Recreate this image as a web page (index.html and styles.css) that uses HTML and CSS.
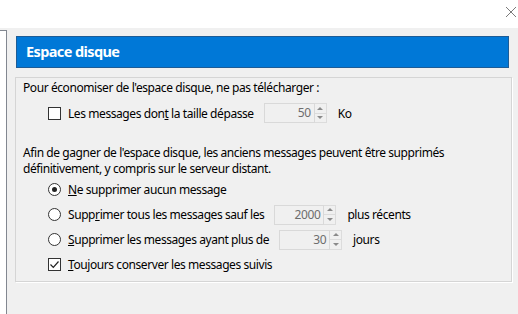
FILE: index.html
```html
<!DOCTYPE html>
<html lang="fr">
<head>
    <meta charset="UTF-8">
    <title>Espace disque</title>
    <link rel="stylesheet" href="styles.css">
</head>
<body>
    <div class="title-bar">
        <svg class="close-btn" width="12" height="12" viewBox="0 0 12 12">
            <path d="M1 1 L11 11 M11 1 L1 11" stroke="#7a7a7a" stroke-width="1" fill="none"/>
        </svg>
    </div>
    <div class="main">
        <div class="side-panel"></div>
        <div class="content">
            <div class="section-header">Espace disque</div>
            <div class="group-box">
                <p class="line">Pour économiser de l'espace disque, ne pas télécharger :</p>
                <div class="option-row first-row">
                    <span class="checkbox"></span>
                    <span class="label">Les messages don<u>t</u> la taille dépasse</span>
                    <span class="spin spin-size">
                        <span class="spin-value">50</span>
                        <span class="spin-arrows"><i class="up"></i><i class="down"></i></span>
                    </span>
                    <span class="unit">Ko</span>
                </div>
                <p class="line para">Afin de gagner de l'espace disque, les anciens messages peuvent être supprimés définitivement, y compris sur le serveur distant.</p>
                <div class="option-row">
                    <span class="radio checked"></span>
                    <span class="label"><u>N</u>e supprimer aucun message</span>
                </div>
                <div class="option-row">
                    <span class="radio"></span>
                    <span class="label">Supp<u>r</u>imer tous les messages sauf les</span>
                    <span class="spin spin-count">
                        <span class="spin-value">2000</span>
                        <span class="spin-arrows"><i class="up"></i><i class="down"></i></span>
                    </span>
                    <span class="unit">plus récents</span>
                </div>
                <div class="option-row">
                    <span class="radio"></span>
                    <span class="label"><u>S</u>upprimer les messages ayant plus de</span>
                    <span class="spin spin-days">
                        <span class="spin-value">30</span>
                        <span class="spin-arrows"><i class="up"></i><i class="down"></i></span>
                    </span>
                    <span class="unit">jours</span>
                </div>
                <div class="option-row">
                    <span class="checkbox checked">
                        <svg width="11" height="11" viewBox="0 0 11 11"><path d="M1.5 5.5 L4.3 8.3 L9.5 2.5" stroke="#222" stroke-width="1.2" fill="none"/></svg>
                    </span>
                    <span class="label"><u>T</u>oujours conserver les messages suivis</span>
                </div>
            </div>
        </div>
    </div>
</body>
</html>
```

FILE: styles.css
```css
* {
    margin: 0;
    padding: 0;
    box-sizing: border-box;
}

body {
    width: 518px;
    height: 314px;
    overflow: hidden;
    background: #f0f0f0;
    font-family: "Noto Sans", "Open Sans", sans-serif;
    font-size: 12px;
    letter-spacing: -0.42px;
    color: #000;
}

.title-bar {
    height: 28px;
    background: #fff;
    display: flex;
    justify-content: flex-end;
    align-items: flex-start;
    padding: 6px 1px 0 0;
}

.main {
    display: flex;
    height: 286px;
    padding-top: 2px;
}

.side-panel {
    width: 8px;
    background: #fff;
    border-right: 1px solid #828790;
    border-top: 1px solid #828790;
}

.content {
    flex: 1;
    padding: 6px 6px 0 8px;
}

.section-header {
    width: 493px;
    height: 32px;
    margin-left: 1px;
    background: #0078d7;
    border: 1px solid #1d5c96;
    color: #fff;
    font-weight: bold;
    font-size: 14.5px;
    letter-spacing: -0.6px;
    line-height: 29px;
    padding-left: 9px;
}

.group-box {
    margin-top: 9px;
    width: 497px;
    height: 205px;
    border: 1px solid #d5d5d5;
    box-shadow: 1px 1px 0 #fff;
    padding: 2px 7px 0 7px;
}

.line {
    line-height: 16px;
}

.para {
    margin-top: 22px;
}

.option-row {
    display: flex;
    align-items: center;
    height: 25px;
    padding-left: 25px;
}

.first-row {
    height: 20px;
    margin-top: 7px;
}

.label {
    margin-left: 7px;
    white-space: nowrap;
}

.checkbox, .radio {
    width: 13px;
    height: 13px;
    border: 1px solid #333;
    background: #fff;
    flex: none;
    display: flex;
    align-items: center;
    justify-content: center;
}

.radio {
    border-radius: 50%;
}

.radio.checked::after {
    content: '';
    width: 5px;
    height: 5px;
    border-radius: 50%;
    background: #222;
}

.spin {
    display: flex;
    height: 20px;
    margin-left: 10px;
}

.spin-value {
    width: 51px;
    border: 1px solid #d9d9d9;
    background: #f0f0f0;
    color: #6d6d6d;
    text-align: right;
    padding-right: 3px;
    line-height: 18px;
}

.spin-arrows {
    width: 12px;
    display: flex;
    flex-direction: column;
    border: 1px solid #dcdcdc;
    border-left: none;
}

.spin-arrows i {
    flex: 1;
    display: flex;
    align-items: center;
    justify-content: center;
}

.spin-arrows .up {
    border-bottom: 1px solid #dcdcdc;
}

.spin-arrows i::after {
    content: '';
    width: 0;
    height: 0;
    border-left: 3px solid transparent;
    border-right: 3px solid transparent;
}

.spin-arrows .up::after {
    border-bottom: 3px solid #8a8a8a;
}

.spin-arrows .down::after {
    border-top: 3px solid #8a8a8a;
}

.spin-count .spin-value {
    width: 50px;
}

.unit {
    margin-left: 11px;
}
```
